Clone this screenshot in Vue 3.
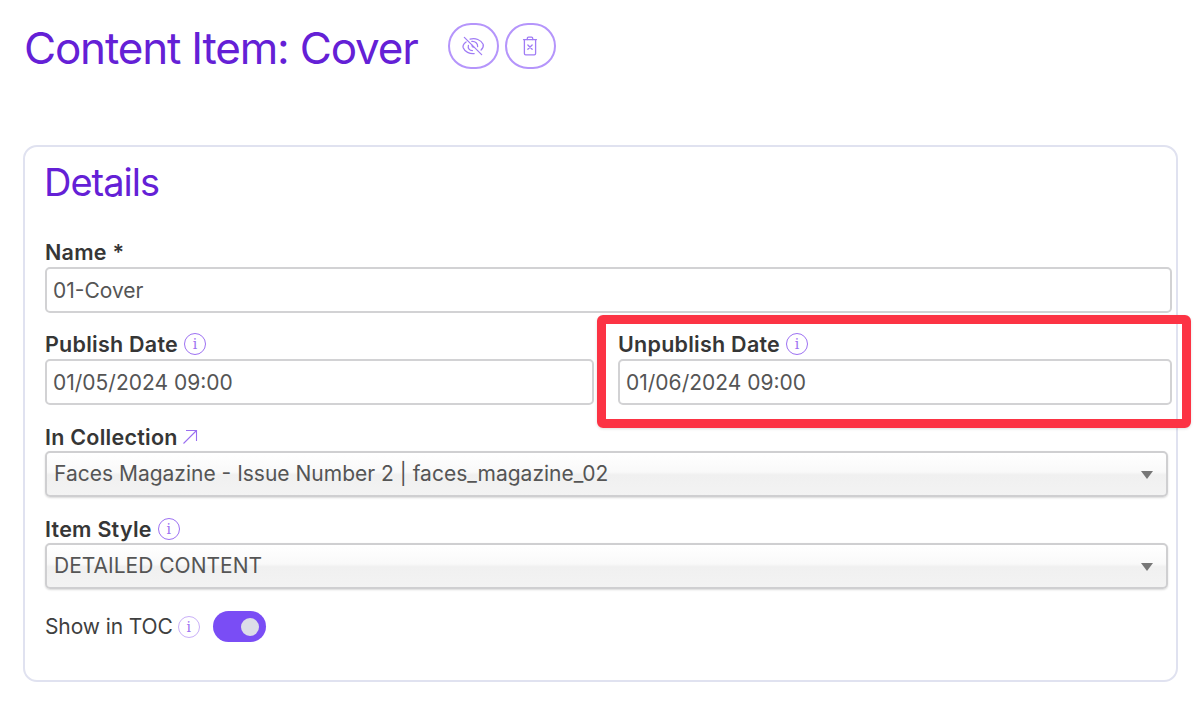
<template>
  <div class="page">
    <header class="head">
      <h1>Content Item: Cover</h1>
      <div class="actions">
        <button class="round" aria-label="Unpublish">
          <svg width="30" height="30" viewBox="0 0 26 26" fill="none" stroke="#a07cf5" stroke-width="1.1" stroke-linecap="round">
            <path d="M5.5 5.5 20.5 20.5" />
            <path d="M7 9.5C4.9 11 4 13 4.500 14.500 6 18 10 20 14 19.600" />
            <path d="M10.500 7.100C15 5.600 20 7.800 21.800 11.500 22.300 13.300 21.600 15 20 16.500" />
            <path d="M9 12.500C8.300 15 10 17 12.500 17" />
            <path d="M12 9C15 8.700 17.300 10.800 17 13.500" />
            <path d="M12.300 12.400C12 13.300 12.600 14 13.500 13.900" />
          </svg>
        </button>
        <button class="round" aria-label="Delete">
          <svg width="28" height="28" viewBox="0 0 26 26" fill="none" stroke="#a07cf5" stroke-width="1.200" stroke-linecap="round" stroke-linejoin="round">
            <path d="M7 7H19" />
            <path d="M10.500 7V5.800C10.500 5.200 11 4.800 11.500 4.800H14.500C15 4.800 15.500 5.200 15.500 5.800V7" />
            <path d="M7.800 7V20C7.800 20.700 8.300 21.200 9 21.200H17C17.700 21.200 18.200 20.700 18.200 20V7" />
            <path d="M11 12 15 16M15 12 11 16" />
          </svg>
        </button>
      </div>
    </header>

    <section class="card">
      <h2>Details</h2>

      <div class="field">
        <label class="lbl">Name *</label>
        <div class="input">01-Cover</div>
      </div>

      <div class="two">
        <div class="field">
          <label class="lbl">Publish Date <span class="info">i</span></label>
          <div class="input">01/05/2024 09:00</div>
        </div>
        <div class="field">
          <label class="lbl">Unpublish Date <span class="info">i</span></label>
          <div class="input">01/06/2024 09:00</div>
          <div class="mark"></div>
        </div>
      </div>

      <div class="field">
        <label class="lbl">In Collection
          <svg class="arrow" width="16" height="16" viewBox="0 0 16 16" fill="none" stroke="#9a6ff0" stroke-width="1.100">
            <path d="M1.500 14.500 14.500 1.500M4 1.500H14.500V12" />
          </svg>
        </label>
        <div class="select">Faces Magazine - Issue Number 2 | faces_magazine_02<i class="caret"></i></div>
      </div>

      <div class="field">
        <label class="lbl">Item Style <span class="info">i</span></label>
        <div class="select">DETAILED CONTENT<i class="caret"></i></div>
      </div>

      <div class="toc">
        <span class="toc-text">Show in TOC</span>
        <span class="info light">i</span>
        <span class="toggle"><span class="knob"></span></span>
      </div>
    </section>
  </div>
</template>

<script setup>
</script>

<style>
html, body { margin: 0; background: #fff; }
</style>

<style scoped>
.page {
  width: 1200px;
  height: 703px;
  box-sizing: border-box;
  padding: 23px 22px 0 23px;
  overflow: hidden;
  font-family: Inter, "Liberation Sans", sans-serif;
  color: #333;
}
.head {
  display: flex;
  align-items: flex-start;
  height: 122px;
}
h1 {
  margin: -1px 0 0 1px;
  font-size: 44px;
  line-height: 52px;
  font-weight: 400;
  color: #6420d6;
  letter-spacing: -1.2px;
  white-space: nowrap;
}
.actions {
  display: flex;
  gap: 6px;
  margin-left: 30px;
}
.round {
  width: 51px;
  height: 46px;
  padding: 0;
  border: 2px solid #b595fb;
  border-radius: 23px;
  background: #fff;
  display: flex;
  align-items: center;
  justify-content: center;
}
.card {
  width: 1155px;
  height: 537px;
  box-sizing: border-box;
  border: 2px solid #e0e2f0;
  border-radius: 14px;
  padding: 14px 4px 0 20px;
}
h2 {
  margin: -1px 0 37px -1px;
  font-size: 38px;
  line-height: 44px;
  font-weight: 400;
  color: #6420d6;
  letter-spacing: -1px;
}
.field {
  position: relative;
  display: flex;
  flex-direction: column;
  margin-bottom: 20px;
}
.lbl {
  display: flex;
  align-items: center;
  gap: 6px;
  height: 22px;
  margin-bottom: 4px;
  font-size: 21.500px;
  font-weight: 620;
  letter-spacing: 0.25px;
  color: #363636;
  white-space: nowrap;
}
.input {
  height: 46px;
  box-sizing: border-box;
  border: 2px solid #d2d2d4;
  border-radius: 5px;
  padding: 0 6px;
  font-size: 21px;
  line-height: 44px;
  color: #555;
  background: #fff;
}
.two {
  display: grid;
  grid-template-columns: 549px 554px;
  column-gap: 24px;
  margin-top: 1px;
  margin-bottom: 1px;
}
.mark {
  position: absolute;
  left: -21px;
  top: -18px;
  width: 594px;
  height: 113px;
  box-sizing: border-box;
  border: 9px solid #fc3344;
  border-radius: 6px;
  pointer-events: none;
  box-shadow: 0 1px 3px rgba(0,0,0,.12);
}
.select {
  position: relative;
  width: 1123px;
  height: 46px;
  margin-top: -1px;
  margin-bottom: 1px;
  box-sizing: border-box;
  border: 2px solid #cfcfd1;
  border-radius: 5px;
  padding: 0 7px;
  font-size: 21px;
  line-height: 42px;
  color: #555;
  background: linear-gradient(#fff 0%, #f9f9f9 45%, #f0f0f0 52%, #f3f3f3 100%);
  box-shadow: 0 1px 2px rgba(0,0,0,.15);
}
.caret {
  position: absolute;
  right: 13px;
  top: 18px;
  width: 0;
  height: 0;
  border-left: 6px solid transparent;
  border-right: 6px solid transparent;
  border-top: 8px solid #777;
}
.info {
  display: inline-flex;
  align-items: center;
  justify-content: center;
  width: 22px;
  height: 22px;
  box-sizing: border-box;
  border: 1px solid #9d71f2;
  border-radius: 50%;
  font-family: "DejaVu Serif", "Liberation Serif", serif;
  font-size: 14px;
  font-weight: 400;
  letter-spacing: 0;
  color: #9d71f2;
}
.info.light { border-color: #c9b0f8; margin-left: 5px; }
.arrow { margin-left: -2px; }
.toc {
  display: flex;
  align-items: center;
  margin-top: 21px;
  height: 31px;
}
.toc-text {
  font-size: 21px;
  letter-spacing: -0.1px;
  color: #3f3f3f;
}
.toggle {
  display: flex;
  align-items: center;
  justify-content: flex-end;
  width: 53px;
  height: 31px;
  margin-left: 13px;
  padding-right: 7px;
  box-sizing: border-box;
  background: #7a4df5;
  border-radius: 16px;
}
.knob {
  width: 18px;
  height: 18px;
  border-radius: 50%;
  background: #dcdde8;
}
</style>
